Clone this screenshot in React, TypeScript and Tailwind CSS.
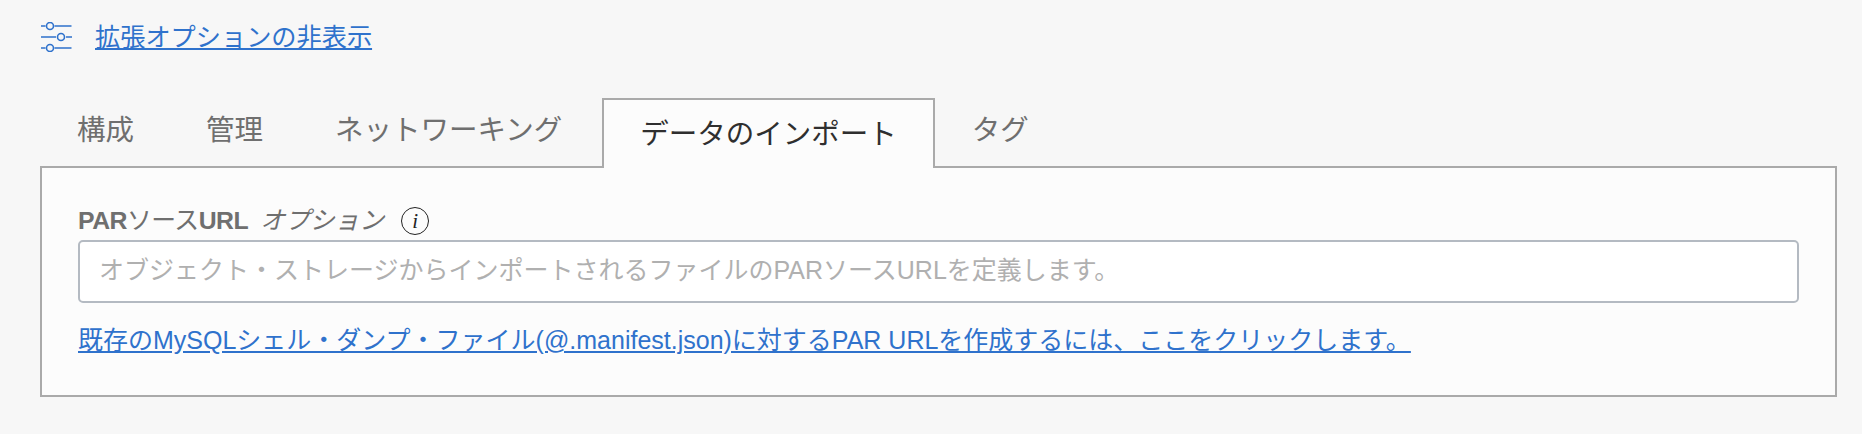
import React from 'react';

const FONT = "font-['Liberation_Sans','Noto_Sans_CJK_JP',sans-serif]";

const tabs = ['構成', '管理', 'ネットワーキング', 'データのインポート', 'タグ'];
const activeTab = 'データのインポート';

const SlidersIcon: React.FC = () => (
  <svg width="32" height="30" viewBox="0 0 32 30" fill="none" stroke="#2f72cc" strokeWidth="1.6">
    <path d="M0 4h4.5M13.5 4h17" />
    <circle cx="9" cy="4" r="3.5" />
    <path d="M0 15h15M25 15h6" />
    <circle cx="20" cy="15" r="3.5" />
    <path d="M0 26h4.5M13.5 26h17" />
    <circle cx="9" cy="26" r="3.5" />
  </svg>
);

const App: React.FC = () => {
  return (
    <div className={`h-[434px] w-[1862px] overflow-hidden bg-[#f7f7f7] pl-10 pr-[25px] pt-[21px] ${FONT}`}>
      <div className="flex h-[32px] items-center gap-[22px] pl-px">
        <SlidersIcon />
        <a href="#" className="text-[25.2px] leading-[32px] text-[#2f72cc] underline underline-offset-2">
          拡張オプションの非表示
        </a>
      </div>

      <div className="relative z-10 mt-[45px] flex h-[70px] items-stretch pl-[1px]">
        {tabs.map(t => (
          <div
            key={t}
            className={
              t === activeTab
                ? 'ml-[4px] mr-[1px] flex items-center border-2 border-b-0 border-[#aaaaaa] bg-[#fcfcfc] px-[36px] text-[28.5px] text-[#2f2f2f]'
                : 'flex items-center px-[36px] pb-[5px] text-[28.5px] text-[#6f6f6f]'
            }
          >
            {t}
          </div>
        ))}
      </div>

      <div className="-mt-[2px] h-[231px] border-2 border-[#aaaaaa] bg-[#fcfcfc] px-[36px] pt-[35px]">
        <div className="mb-px flex h-[36px] items-center text-[24.8px] text-[#6f6f6f]">
          <span className="font-bold tracking-[-0.5px]">PAR<span className="font-normal">ソース</span>URL</span>
          <span className="ml-[12px] italic">オプション</span>
          <span className="ml-[17px] flex h-[28px] w-[28px] items-center justify-center rounded-full border-[1.5px] border-[#222222] font-['Liberation_Serif',serif] text-[21px] italic leading-none text-[#222222]">
            i
          </span>
        </div>
        <input
          className="block h-[63px] w-full rounded-[5px] border-2 border-[#b4bac2] bg-white px-[19px] pb-[2px] text-[25px] outline-none placeholder:text-[#b0b0b0]"
          placeholder="オブジェクト・ストレージからインポートされるファイルのPARソースURLを定義します。"
        />
        <div className="mt-[20px]">
          <a href="#" className="text-[25px] leading-[34px] text-[#2f72cc] underline underline-offset-2">
            既存のMySQLシェル・ダンプ・ファイル(@.manifest.json)に対するPAR URLを作成するには、ここをクリックします。
          </a>
        </div>
      </div>
    </div>
  );
};

export default App;
